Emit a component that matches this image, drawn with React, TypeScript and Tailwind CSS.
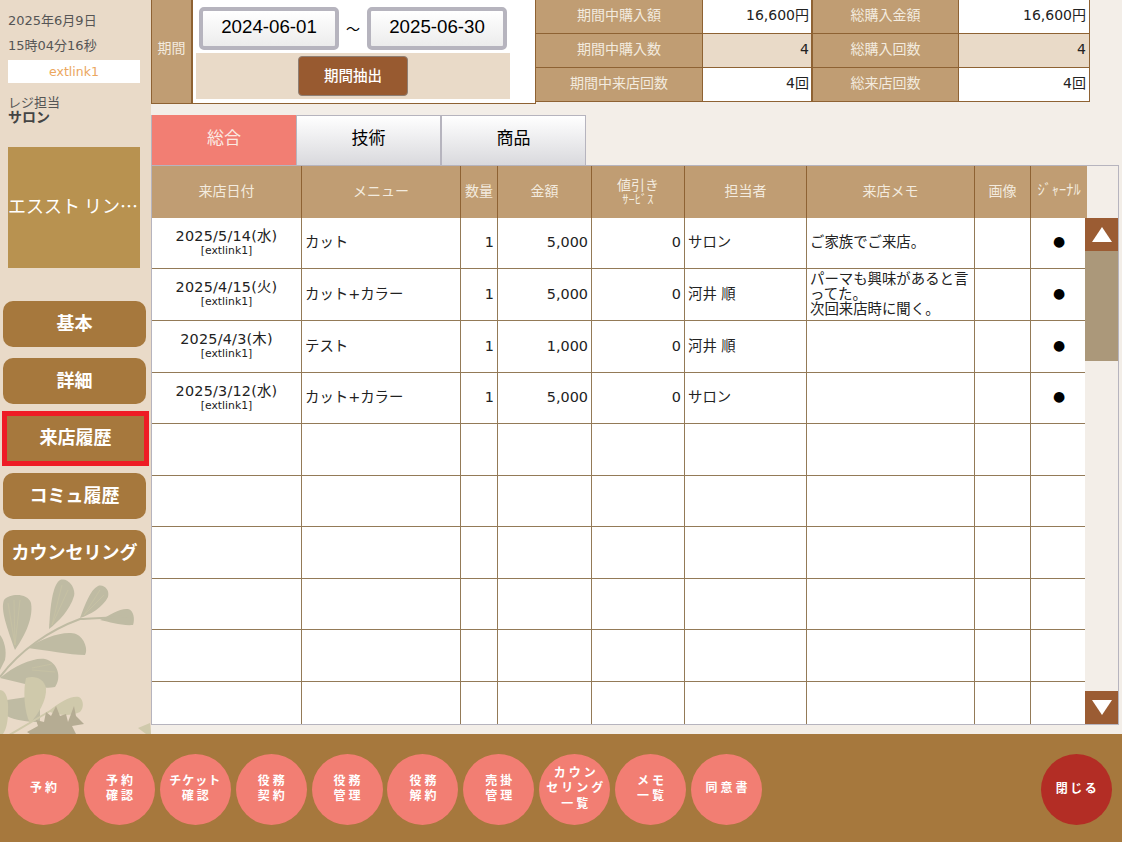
import React from "react";

const rows = [
  { h: "h-[51px]", d: "2025/5/14(水)", m: "カット", q: "1", a: "5,000", s: "0", t: "サロン", n: "ご家族でご来店。", j: true },
  { h: "h-[52px]", d: "2025/4/15(火)", m: "カット+カラー", q: "1", a: "5,000", s: "0", t: "河井 順", n: "パーマも興味があると言ってた。\n次回来店時に聞く。", j: true },
  { h: "h-[52px]", d: "2025/4/3(木)", m: "テスト", q: "1", a: "1,000", s: "0", t: "河井 順", n: "", j: true },
  { h: "h-[51px]", d: "2025/3/12(水)", m: "カット+カラー", q: "1", a: "5,000", s: "0", t: "サロン", n: "", j: true },
  { h: "h-[52px]", d: "", m: "", q: "", a: "", s: "", t: "", n: "", j: false },
  { h: "h-[51px]", d: "", m: "", q: "", a: "", s: "", t: "", n: "", j: false },
  { h: "h-[52px]", d: "", m: "", q: "", a: "", s: "", t: "", n: "", j: false },
  { h: "h-[51px]", d: "", m: "", q: "", a: "", s: "", t: "", n: "", j: false },
  { h: "h-[52px]", d: "", m: "", q: "", a: "", s: "", t: "", n: "", j: false },
  { h: "h-[52px]", d: "", m: "", q: "", a: "", s: "", t: "", n: "", j: false },
];

const sideButtons = ["基本", "詳細", "来店履歴", "コミュ履歴", "カウンセリング"];
const circles = [
  ["予約"], ["予約", "確認"], ["チケット", "確認"], ["役務", "契約"], ["役務", "管理"],
  ["役務", "解約"], ["売掛", "管理"], ["カウン", "セリング", "一覧"], ["メモ", "一覧"], ["同意書"],
];

const stats = [
  ["期間中購入額", "16,600円", "総購入金額", "16,600円", "bg-white", "h-[34px]"],
  ["期間中購入数", "4", "総購入回数", "4", "bg-[#e9dac8]", "h-[34px]"],
  ["期間中来店回数", "4回", "総来店回数", "4回", "bg-white", "h-[33px]"],
];

function Leaves() {
  return (
    <svg className="absolute left-0 bottom-0" width="151" height="156" viewBox="0 578 151 156">
      <g fill="#bfbba3">
        <path d="M15 650C8 630 0 610 4 600C10 593 28 593 31 603C34 620 22 640 15 650Z" />
        <path d="M49 629C50 610 52 585 60 580C68 577 76 588 74 596C70 610 58 622 49 629Z" />
        <path d="M80 618C85 605 90 590 98 586C104 584 110 590 108 597C103 607 90 615 80 618Z" />
        <path d="M100 620C110 615 120 608 128 609C134 610 135 620 133 625C122 626 110 622 100 620Z" />
        <path d="M28 648C42 638 65 630 76 634C85 638 88 650 85 655C70 655 45 650 28 648Z" />
        <path d="M0 678C15 665 35 657 45 659C58 662 62 678 55 687C40 690 20 682 0 678Z" />
        <path d="M0 635C4 640 7 650 5 660L0 670Z" />
        <path d="M7 700L40 695L40 722C28 722 14 720 7 716Z" />
      </g>
      <path d="M0 677C20 650 50 630 80 619C95 618 110 618 130 616" fill="none" stroke="#bfbba3" strokeWidth="2" />
      <g fill="#cfc9ab">
        <path d="M26 678C34 675 44 678 46 688C47 700 38 715 30 723C24 712 23 690 26 678Z" />
        <path d="M0 690C6 690 9 700 8 712C8 722 6 730 3 734L0 734Z" />
        <path d="M50 710C60 702 72 695 79 697C84 700 84 708 80 712C72 716 60 716 50 712L13 734L9 734Z" />
        <path d="M138 728L150 723L151 734L146 734Z" />
      </g>
      <path
        d="M27 732L38 726L36 720L44 722L46 712L51 716L56 706L60 716L66 714L68 722L74 706L76 716L84 724L72 726L76 734L30 734Z"
        fill="#b5ac93"
      />
      <g fill="none" stroke="#cdc6a4" strokeWidth="0.5">
        <path d="M15 645L14 600M15 645L20 600M15 645L8 603" />
        <path d="M52 625L62 585M52 625L68 590" />
        <path d="M84 615L100 590M84 615L104 595" />
        <path d="M32 670L55 672M32 668L52 664" />
      </g>
    </svg>
  );
}

function Triangle({ up }: { up: boolean }) {
  return (
    <svg width="20" height="15" viewBox="0 0 20 15">
      <polygon points={up ? "10,0 20,15 0,15" : "0,0 20,0 10,15"} fill="#ffffff" />
    </svg>
  );
}

export default function App() {
  return (
    <div className="w-[1122px] h-[842px] overflow-hidden flex flex-col bg-[#f3eee8] font-['DejaVu_Sans','Noto_Sans_CJK_JP',sans-serif] text-[#222]">
      <div className="flex h-[734px]">
        <aside className="relative w-[151px] shrink-0 bg-[#e9dac8]">
          <Leaves />
          <div className="relative flex flex-col">
            <div className="pl-2 pt-[13px] text-[13px] leading-[16px] text-[#555]">2025年6月9日</div>
            <div className="pl-2 pt-[9px] text-[13px] leading-[16px] text-[#555]">15時04分16秒</div>
            <div className="ml-2 mt-[6px] w-[132px] h-[23px] bg-white text-center text-[12.5px] leading-[23px] text-[#eba75e]">extlink1</div>
            <div className="pl-2 mt-[12px] text-[13px] leading-[15px] text-[#555]">レジ担当</div>
            <div className="pl-2 text-[14px] leading-[15px] font-bold text-[#444]">サロン</div>
            <div className="ml-2 mt-[22px] w-[132px] h-[121px] bg-[#b89250] flex items-center pb-[5px]">
              <div className="w-full whitespace-nowrap text-white text-[18px] leading-[24px] font-['Noto_Sans_CJK_JP',sans-serif]">エススト リン…</div>
            </div>
            <div className="mt-[33px] ml-[3px] flex flex-col gap-[11px] w-[143px]">
              {sideButtons.map((b) =>
                b === "来店履歴" ? (
                  <div key={b} className="relative -ml-[1px] -my-[4px] w-[147px] h-[55px] border-[5px] border-[#ee1c25] bg-[#a6783d] flex items-center justify-center pb-[2px] text-white font-bold text-[18px]">
                    {b}
                  </div>
                ) : (
                  <div key={b} className="h-[46px] rounded-[10px] bg-[#a6783d] flex items-center justify-center pb-[2px] text-white font-bold text-[18px]">
                    {b}
                  </div>
                )
              )}
            </div>
          </div>
        </aside>

        <main className="flex-1 flex flex-col min-w-0">
          <div className="flex h-[103px] items-start">
            <div className="flex shrink-0 w-[385px] h-[104px] bg-white border-b border-r border-[#8e6233]">
              <div className="w-[42px] bg-[#c09d73] border-l border-r-2 border-[#8e6233] flex items-center justify-center pb-[6px] text-[14px] text-[#f3ebdf]">期間</div>
              <div className="flex-1 flex flex-col pl-[3px] pt-[7px]">
                <div className="flex items-center pl-[3px] font-['Liberation_Sans',sans-serif] text-[18.7px] text-black">
                  <div className="w-[140px] h-[43px] rounded-[5px] border-[4px] border-[#b6b4be] bg-gradient-to-b from-white to-[#ececec] flex items-center justify-center pb-[2px]">2024-06-01</div>
                  <div className="w-[28px] text-center text-[14px] font-['Noto_Sans_CJK_JP',sans-serif]">～</div>
                  <div className="w-[140px] h-[43px] rounded-[5px] border-[4px] border-[#b6b4be] bg-gradient-to-b from-white to-[#ececec] flex items-center justify-center pb-[2px]">2025-06-30</div>
                </div>
                <div className="mt-[3px] w-[314px] h-[46px] bg-[#e9dac8] flex items-center justify-center">
                  <div className="w-[110px] h-[40px] rounded-[4px] border border-[#8f7f74] bg-[#985a30] flex items-center justify-center pt-[1px] text-white text-[14.5px] font-medium">期間抽出</div>
                </div>
              </div>
            </div>
            <div className="flex flex-col shrink-0 w-[554px] border-b border-r border-[#8e6233]">
              {stats.map((r) => (
                <div key={r[0]} className={`flex ${r[5]} border-b border-[#8e6233] last:border-b-0 text-[14px]`}>
                  <div className="w-[166px] bg-[#c09d73] flex items-center justify-center pb-[3px] text-[#f3ebdf]">{r[0]}</div>
                  <div className={`w-[111px] border-l border-r-2 border-[#8e6233] ${r[4]} flex items-center justify-end pr-[2px] pb-[3px]`}>{r[1]}</div>
                  <div className="w-[145px] bg-[#c09d73] flex items-center justify-center pb-[3px] text-[#f3ebdf]">{r[2]}</div>
                  <div className={`flex-1 border-l border-[#8e6233] ${r[4]} flex items-center justify-end pr-[3px] pb-[3px]`}>{r[3]}</div>
                </div>
              ))}
            </div>
          </div>

          <div className="mt-[12px] flex h-[50px] text-[17px]">
            <div className="w-[145px] border-l border-[#b6b4be] bg-[#f27e73] flex items-center justify-center pb-[3px] text-[#fbe9e2]">総合</div>
            {["技術", "商品"].map((t) => (
              <div key={t} className="w-[145px] border border-[#b6b4be] border-b-0 bg-gradient-to-b from-white to-[#d9d9dd] flex items-center justify-center pb-[3px] text-black">{t}</div>
            ))}
          </div>

          <div className="flex w-[968px] h-[560px] border border-[#b6b4be]">
            <div className="w-[935px] shrink-0 flex flex-col overflow-hidden">
              <div className="flex h-[52px] shrink-0 bg-[#c09d73] text-[#f3ebdf] text-[14px] divide-x divide-[#8e6233]">
                <div className="w-[150px] flex items-center justify-center pb-[2px]">来店日付</div>
                <div className="w-[159px] flex items-center justify-center pb-[2px]">メニュー</div>
                <div className="w-[37px] flex items-center justify-center pb-[2px]">数量</div>
                <div className="w-[94px] flex items-center justify-center pb-[2px]">金額</div>
                <div className="w-[93px] flex flex-col items-center justify-center leading-[15px]">
                  <span>値引き</span>
                  <span className="text-[12.5px] leading-[13px]">ｻｰﾋﾞｽ</span>
                </div>
                <div className="w-[122px] flex items-center justify-center pb-[2px]">担当者</div>
                <div className="w-[168px] flex items-center justify-center pb-[2px]">来店メモ</div>
                <div className="w-[56px] flex items-center justify-center pb-[2px]">画像</div>
                <div className="flex-1 flex items-center justify-center pb-[2px] text-[14.4px]">ｼﾞｬｰﾅﾙ</div>
              </div>
              {rows.map((r, i) => (
                <div key={i} className={`flex ${r.h} shrink-0 bg-white border-b border-[#937a57] text-[14.4px] divide-x divide-[#937a57]`}>
                  <div className="w-[150px] flex flex-col items-center justify-center pb-[4px]">
                    <span className="leading-[18px] tracking-[0.2px]">{r.d}</span>
                    {r.d && <span className="text-[10.8px] leading-[11px]">[extlink1]</span>}
                  </div>
                  <div className="w-[159px] flex items-center pl-[3px]">{r.m}</div>
                  <div className="w-[37px] flex items-center justify-end pr-[3px]">{r.q}</div>
                  <div className="w-[94px] flex items-center justify-end pr-[3px]">{r.a}</div>
                  <div className="w-[93px] flex items-center justify-end pr-[3px]">{r.s}</div>
                  <div className="w-[122px] flex items-center pl-[3px]">{r.t}</div>
                  <div className="w-[168px] flex items-center pl-[3px] pr-[3px] pb-[1px] leading-[15px] whitespace-pre-line">{r.n}</div>
                  <div className="w-[56px]" />
                  <div className="flex-1 flex items-center justify-center pb-[3px] text-[14px] text-black">{r.j ? "●" : ""}</div>
                </div>
              ))}
            </div>
            <div className="relative -ml-[2px] flex-1 flex flex-col">
              <div className="h-[52px] shrink-0" />
              <div className="flex-1 flex flex-col bg-[#f3eee8]">
                <div className="h-[33px] bg-[#9b5c33] flex items-center justify-center"><Triangle up /></div>
                <div className="h-[110px] bg-[#ab987a]" />
                <div className="flex-1" />
                <div className="h-[33px] bg-[#9b5c33] flex items-center justify-center"><Triangle up={false} /></div>
              </div>
            </div>
          </div>
        </main>
      </div>

      <footer className="flex-1 bg-[#a6783d] flex items-center justify-between pl-[8px] pr-[10px] pt-[2px]">
        <div className="flex gap-[4.9px]">
          {circles.map((c) => (
            <div key={c.join("")} className="w-[71px] h-[71px] rounded-full bg-[#f27e73] flex flex-col items-center justify-center text-white text-[12px] leading-[15.5px] font-bold">
              {c.map((l) => (
                <span key={l} className={l === "チケット" ? "tracking-[1px]" : "tracking-[3px] pl-[3px]"}>{l}</span>
              ))}
            </div>
          ))}
        </div>
        <div className="w-[71px] h-[71px] rounded-full bg-[#b32d25] flex items-center justify-center pl-[2px] text-white text-[12px] font-bold tracking-[2.5px]">閉じる</div>
      </footer>
    </div>
  );
}
